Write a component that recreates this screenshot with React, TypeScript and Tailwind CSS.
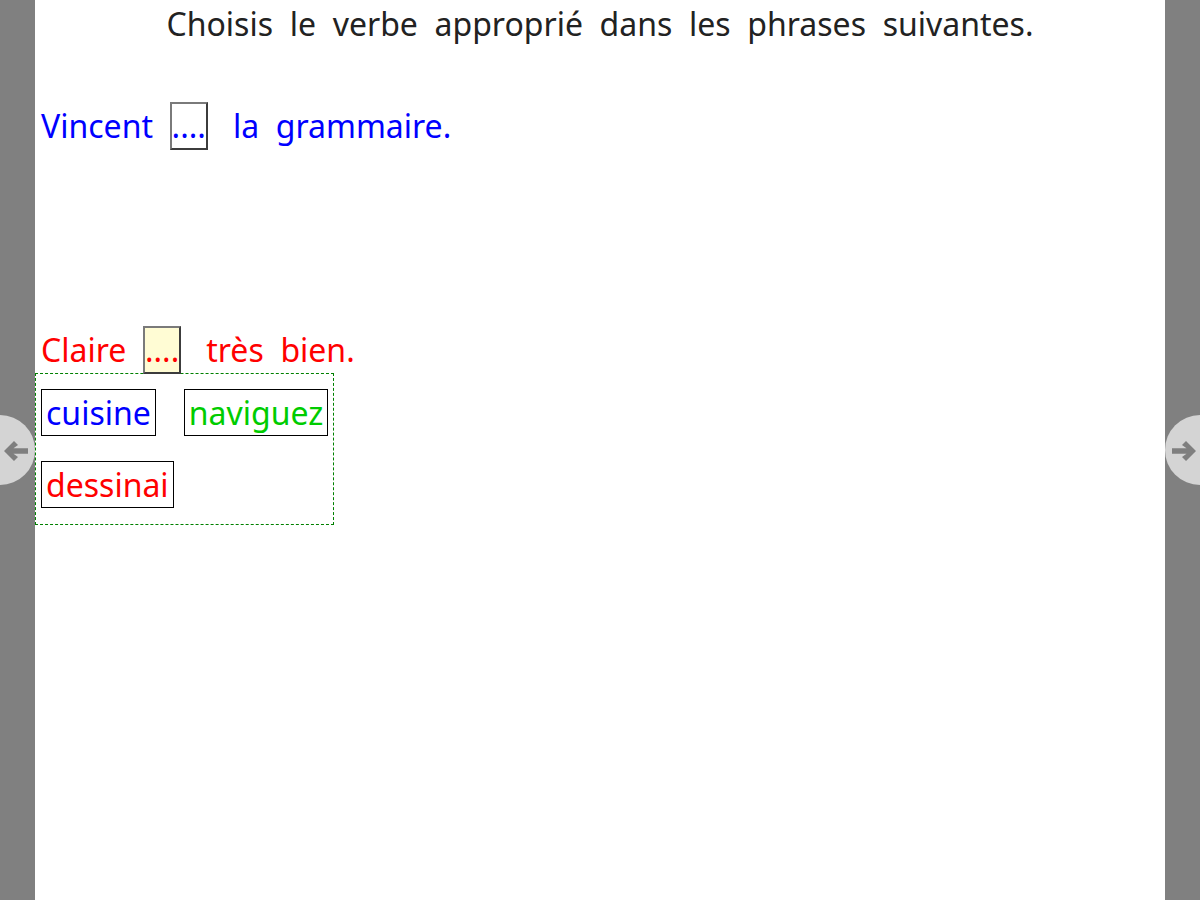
import React from "react";

const font = { fontFamily: '"Noto Sans", "Open Sans", sans-serif' };

function Blank({ color, bg }: { color: string; bg: string }) {
  return (
    <span
      className={`inline-block border-2 border-t-[#7a7a7a] border-l-[#7a7a7a] border-r-[#3c3c3c] border-b-[#3c3c3c] leading-[44px] ${bg} ${color}`}
    >
      ....
    </span>
  );
}

function Chip({ text, color }: { text: string; color: string }) {
  return (
    <span className={`inline-block border border-black px-[4px] leading-[45px] ${color}`}>{text}</span>
  );
}

export default function App() {
  const S2 = "\u00a0 ";
  const S3 = "\u00a0\u00a0 ";
  return (
    <div className="relative flex h-[900px] w-[1200px] overflow-hidden bg-white" style={font}>
      <div className="w-[35px] shrink-0 bg-[#808080]" />
      <div className="flex-1 text-[32px]">
        <div className="h-[47px] pt-[2px] text-center leading-[44px] text-[#222222]">
          Choisis{S2}le{S2}verbe{S2}approprié{S2}dans{S2}les{S2}phrases{S2}suivantes.
        </div>
        <div className="mt-[55px] pl-[6px] leading-[44px] text-[#0000ff] whitespace-pre">
          Vincent{S2}
          <Blank color="text-[#0000ff]" bg="bg-white" />
          {S3}la{S2}grammaire.
        </div>
        <div className="mt-[176px] pl-[6px] leading-[44px] text-[#ff0000] whitespace-pre">
          Claire{S2}
          <Blank color="text-[#ff0000]" bg="bg-[#fffcd4]" />
          {S3}très{S2}bien.
        </div>
        <div className="-mt-[1px] flex h-[152px] w-[299px] flex-wrap content-start gap-x-[28px] gap-y-[25px] border border-dashed border-[#008000] pl-[5px] pt-[15px]">
          <Chip text="cuisine" color="text-[#0000ff]" />
          <Chip text="naviguez" color="text-[#00cc00]" />
          <Chip text="dessinai" color="text-[#ff0000]" />
        </div>
      </div>
      <div className="w-[35px] shrink-0 bg-[#808080]" />

      <svg className="absolute left-0 top-[415px]" width="35" height="70" viewBox="0 0 35 70">
        <circle cx="0" cy="35" r="35" fill="#d4d4d4" />
        <polygon
          points="4,36 14,26 18,30 13.5,33.2 28,33.2 28,38.8 13.5,38.8 18,42 14,46"
          fill="#7f7f7f"
        />
      </svg>
      <svg className="absolute right-0 top-[415px]" width="35" height="70" viewBox="0 0 35 70">
        <circle cx="35" cy="35" r="35" fill="#d4d4d4" />
        <polygon
          points="31,36 21,26 17,30 21.5,33.2 7,33.2 7,38.8 21.5,38.8 17,42 21,46"
          fill="#7f7f7f"
        />
      </svg>
    </div>
  );
}
